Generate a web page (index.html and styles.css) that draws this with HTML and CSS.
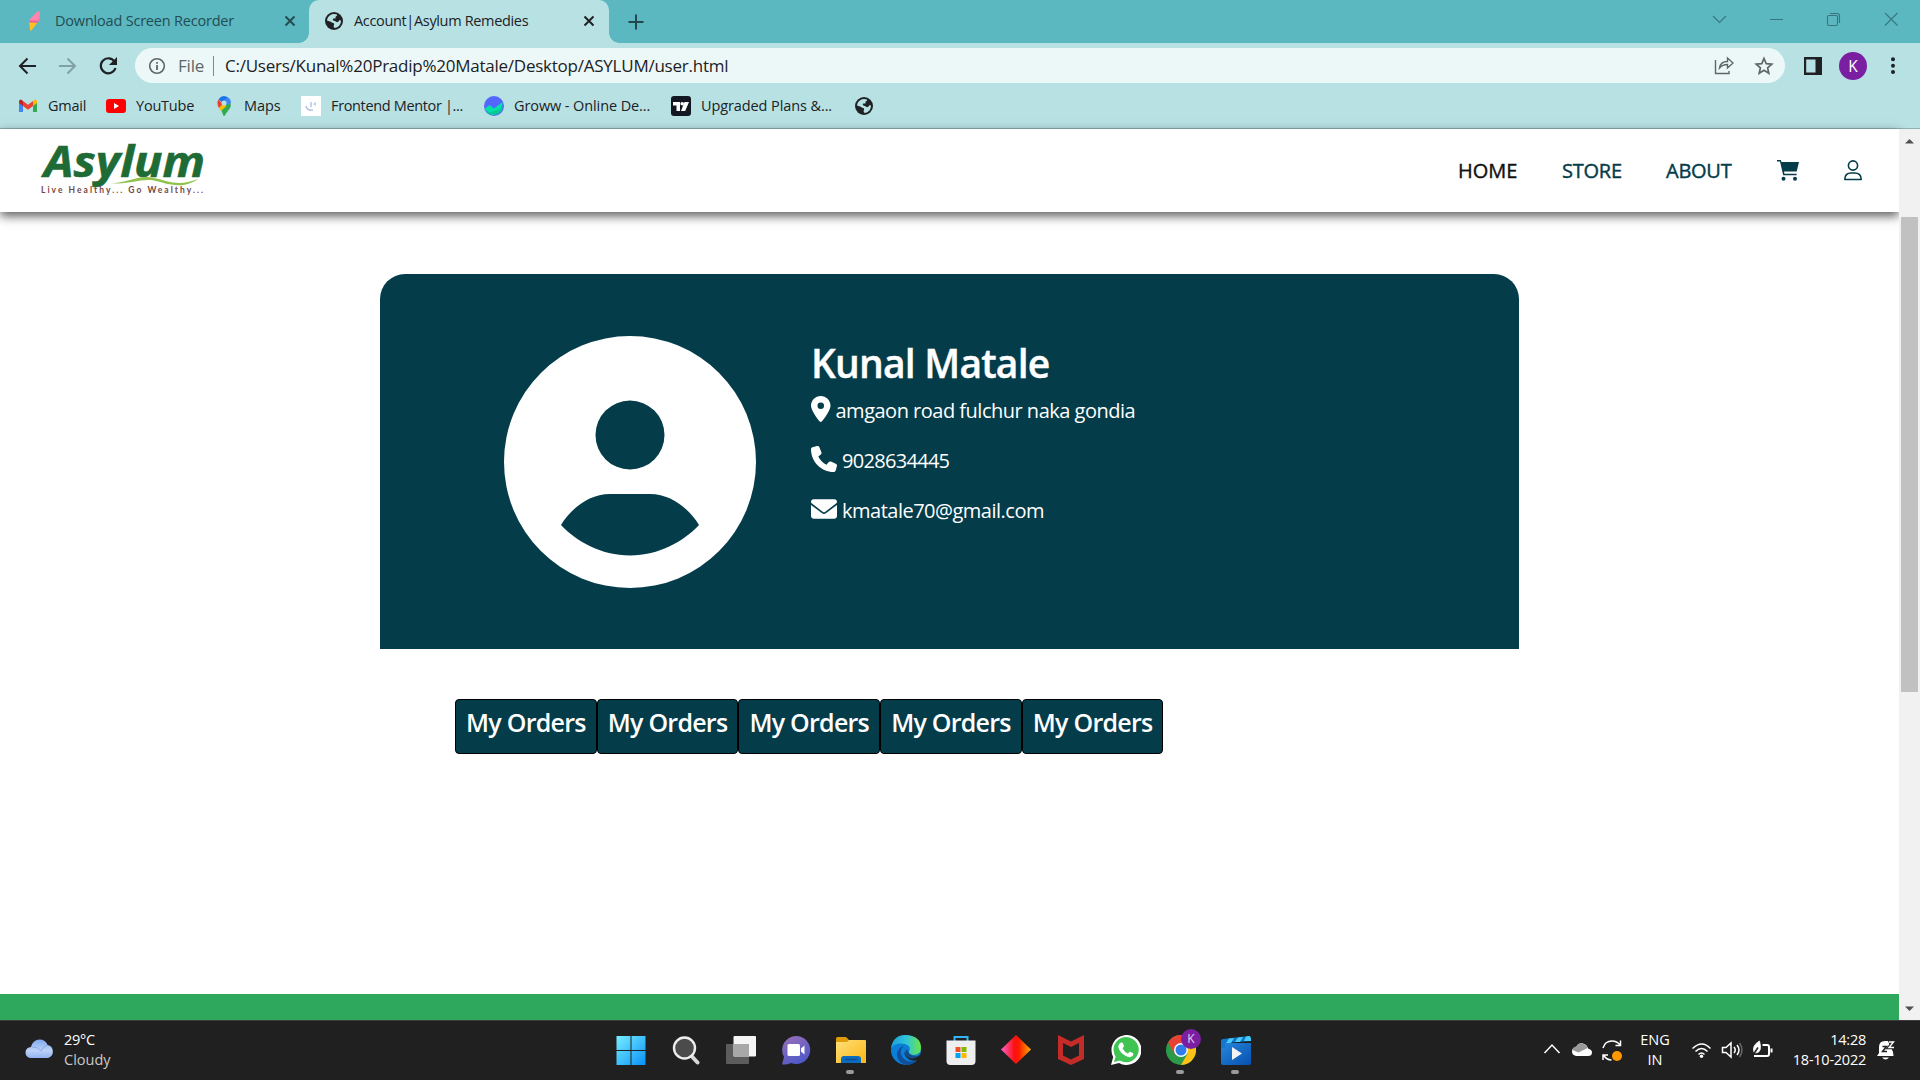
FILE: index.html
```html
<!DOCTYPE html>
<html lang="en">
<head>
<meta charset="utf-8">
<title>Account|Asylum Remedies</title>
<link rel="stylesheet" href="styles.css">
</head>
<body>
<svg class="defs" aria-hidden="true">
  <symbol id="globe" viewBox="0 0 18 18">
    <circle cx="9" cy="9" r="9" fill="#202124"/>
    <path fill="#b8e1e4" d="M2 8.500 5 9.600c1 .2 1.300 1 2.400 1.200 1.200.1 1.900.6 1.700 1.700L8.600 14c0 .9.400 1.600 1.200 2A7.100 7.100 0 0 0 16 8.400l-1.700-.2-1 1.600c-.8.700-2 .4-2.400-.4L8.500 8.600C7.400 8 7.600 6.500 8.900 6.500l1.600-.1V5c.3-.9 1.500-.7 1.500-1.800V2.600A7.200 7.200 0 0 0 2 8.500z"/>
  </symbol>
  <symbol id="close" viewBox="0 0 12 12"><path d="M1.500 1.500l9 9m0-9l-9 9" fill="none" stroke="currentColor" stroke-width="2"/></symbol>
</svg>

<header class="tabs">
  <div class="tab">
    <svg class="tab-icon" viewBox="0 0 18 22"><path d="M4 10 13 1q2 0 2 3l-1 7-8 2z" fill="#ff85ae"/><path d="M4 11l9 1-7 9q-1 0-1-2z" fill="#ffc11f"/><path d="M4 10.500l10 .3-1.500 2-8-.3z" fill="#e95f98"/></svg>
    <span class="tab-title t-download">Download Screen Recorder</span>
    <svg class="tab-close"><use href="#close"/></svg>
  </div>
  <div class="tab active">
    <svg class="tab-icon globe"><use href="#globe"/></svg>
    <span class="tab-title t-account">Account|Asylum Remedies</span>
    <svg class="tab-close"><use href="#close"/></svg>
  </div>
  <svg class="new-tab" viewBox="0 0 16 16"><path d="M8 .5v15M.5 8h15" stroke="#23474d" stroke-width="2"/></svg>
  <svg class="window-buttons" viewBox="0 0 190 16" fill="none" stroke="#38767d" stroke-width="1.100">
    <path d="M3 5l6.500 6.500L16 5M60 8.500h13M175 2l12.500 12.500m0-12.500L175 14.500"/>
    <rect x="117.500" y="4.500" width="10" height="10" rx="1.500"/><path d="M120 2.500h7q2.500 0 2.500 2.500v7"/>
  </svg>
</header>

<div class="toolbar">
  <svg class="nav-buttons" viewBox="0 0 102 20" fill="none" stroke-width="2">
    <path d="M19 10H3M10.500 2.500 3 10l7.500 7.500" stroke="#202124"/>
    <path d="M42 10h16M50.500 2.500 58 10l-7.500 7.500" stroke="#82a1a5"/>
    <path d="M97.500 5.500A7.500 7.500 0 1 0 98.500 12" stroke="#202124" stroke-width="2.200"/><path d="M100 1v8h-8z" fill="#202124"/>
  </svg>
  <div class="omnibox">
    <svg class="info" viewBox="0 0 18 18"><circle cx="9" cy="9" r="7.300" fill="none" stroke="#5f6668" stroke-width="1.600"/><path d="M9 8v5M9 5v1.800" stroke="#5f6668" stroke-width="1.800"/></svg>
    <span class="scheme">File</span>
    <span class="url">C:/Users/Kunal%20Pradip%20Matale/Desktop/ASYLUM/user.html</span>
    <svg class="share" viewBox="0 0 60 20" fill="none" stroke="#5f6668" stroke-width="1.400">
      <path d="M1.500 4v13.500H15V15M5.500 12q1-6.500 8-6.500V2l5.500 5-5.500 5V8.500q-5 0-8 3.500z"/>
      <path d="M50 2.500l2.200 5.100 5.600.5-4.200 3.700 1.200 5.400-4.800-2.900-4.800 2.900 1.200-5.400-4.200-3.700 5.600-.5z" stroke-width="1.700"/>
    </svg>
  </div>
  <svg class="side-panel" viewBox="0 0 18 18"><path d="M0 0h18v18H0z" fill="#202124"/><path d="M2.200 2.500h9.300v13H2.200z" fill="#b8e1e4"/></svg>
  <span class="profile">K</span>
  <svg class="menu" viewBox="0 0 4 18" fill="#202124"><circle cx="2" cy="2.300" r="2"/><circle cx="2" cy="8.700" r="2"/><circle cx="2" cy="15.100" r="2"/></svg>
</div>

<nav class="bookmarks">
  <a class="bm"><svg viewBox="0 0 20 20"><path d="M1 5v11h4V9z" fill="#4285f4"/><path d="M15 9v7h4V5z" fill="#34a853"/><path d="M5 5v5l5 3.700L15 10V5l-5 3.700z" fill="#ea4335"/><path d="M1 5.500Q1 3.500 3 3.500L5 5v5L1 7z" fill="#c5221f"/><path d="M19 5.500Q19 3.500 17 3.500L15 5v5l4-3z" fill="#fbbc04"/></svg><span class="t-gmail">Gmail</span></a>
  <a class="bm"><svg viewBox="0 0 20 20"><rect y="3" width="20" height="14" rx="3" fill="red"/><path d="M8 7v6l5-3z" fill="#fff"/></svg><span class="t-yt">YouTube</span></a>
  <a class="bm"><svg viewBox="0 0 20 20"><path d="M10 20q-.8 0-1.200-2Q8 15 5 11L15 4q4 6-1 11-2 2-2.800 4-.4 1-1.200 1z" fill="#34a853"/><path d="M4.500 3.500 9 8l-4 4Q2 7 4.500 3.500z" fill="#ea4335"/><path d="M4.500 3.300Q7 0 10 0q2 0 4 1.500L9 7z" fill="#1a73e8"/><path d="M13.500 1Q17 3 17 7L12 9 9 6z" fill="#4285f4"/><path d="M5 12l4.500-5 3 3L7 15z" fill="#fbbc04"/><circle cx="10" cy="7" r="2.500" fill="#b8e1e4"/></svg><span class="t-maps">Maps</span></a>
  <a class="bm"><svg viewBox="0 0 20 20"><path d="M0 0h20v20H0z" fill="#fff"/><path d="M5 10q1 5 7 4M10 6v5" fill="none" stroke="#b7c3e6" stroke-width="1.500"/><path d="M12 8l3-2v4z" fill="#a8d9ec"/></svg><span class="t-fm">Frontend Mentor |...</span></a>
  <a class="bm"><svg viewBox="0 0 20 20"><circle cx="10" cy="10" r="10" fill="#5367ff"/><path d="M.5 13l5-4 4.500 3.500L18.500 6A10 10 0 0 1 .5 13z" fill="#00e3a5"/><path d="M2 16q8 1 17-5A10 10 0 0 1 2 16z" fill="#08c898"/></svg><span class="t-groww">Groww - Online De...</span></a>
  <a class="bm"><svg viewBox="0 0 20 20"><rect width="20" height="20" rx="3" fill="#131722"/><path d="M2 6h7v9H5.500V9.500H2zM13.500 6H18l-3.800 9H10z" fill="#fff"/><circle cx="11.200" cy="7.800" r="1.800" fill="#fff"/></svg><span class="t-tv">Upgraded Plans &amp;...</span></a>
  <a class="bm"><svg class="globe"><use href="#globe"/></svg></a>
</nav>

<div class="viewport">
  <main class="page">
    <div class="site-nav">
      <svg class="logo" viewBox="0 0 170 64" role="img" aria-label="Asylum">
        <text x="4" y="39" textLength="161" lengthAdjust="spacingAndGlyphs" class="logo-name">Asylum</text>
        <path d="M70 45c18 1 27-9 44-5 15 3 24 9 44 1-16 11-29 5-44 1.500-15-2-24 4.500-44 2.500z" fill="#8fc24a"/>
        <text x="1" y="55" textLength="162" class="logo-tag">Live Healthy... Go Wealthy...</text>
      </svg>
      <div class="links">
        <a class="current">HOME</a><a>STORE</a><a>ABOUT</a>
        <svg class="cart" viewBox="0 0 22 22" fill="#043c4a"><path d="M0 0h3.700L4.600 2H22l-2.300 9.500H7l.4 2.200h12.200v1.500H6.200L3 1.500H0z"/><circle cx="6.500" cy="18.700" r="2"/><circle cx="18" cy="18.700" r="2"/></svg>
        <svg class="user" viewBox="0 0 18 21" fill="none" stroke="#043c4a" stroke-width="1.600"><circle cx="9" cy="5.500" r="4.600"/><path d="M.8 19.500q0-6.500 6.500-6.500h3.400q6.500 0 6.500 6.500z" stroke-linejoin="round"/></svg>
      </div>
    </div>

    <section class="card">
      <svg class="avatar" viewBox="0 0 252 252"><path fill="#fff" fill-rule="evenodd" d="M126 0a126 126 0 1 1 0 252A126 126 0 0 1 126 0zm0 64.500a34.500 34.500 0 1 0 0 69 34.500 34.500 0 0 0 0-69zM57 189c15 16 40 30.500 69 30.500S180 205 195 189c-9-15-27-31-49-31h-40c-22 0-40 16-49 31z"/></svg>
      <div class="details">
        <h1>Kunal Matale</h1>
        <p><svg class="pin" viewBox="0 0 384 512"><path d="M215.700 499.200C267 435 384 279.400 384 192 384 86 298 0 192 0S0 86 0 192c0 87.400 117 243 168.300 307.200 12.300 15.300 35.100 15.300 47.400 0zM192 128a64 64 0 1 1 0 128 64 64 0 1 1 0-128z"/></svg><span>amgaon road fulchur naka gondia</span></p>
        <p><svg viewBox="0 0 512 512"><path d="M164.900 24.600c-7.700-18.600-28-28.500-47.400-23.200l-88 24C12.100 30.200 0 46 0 64c0 247.400 200.600 448 448 448 18 0 33.800-12.100 38.600-29.500l24-88c5.300-19.400-4.600-39.700-23.200-47.400l-96-40c-16.300-6.800-35.200-2.100-46.300 11.600L304.700 368C234.300 334.700 177.300 277.700 144 207.300L193.300 167c13.700-11.200 18.400-30 11.600-46.300z"/></svg><span class="t-phone">9028634445</span></p>
        <p><svg viewBox="0 0 512 512"><path d="M48 64a48 48 0 0 0-29 86l218 164q19 14 38 0l218-164a48 48 0 0 0-29-86zM0 176v208q0 64 64 64h384q64 0 64-64V176L294 339q-38 29-76 0z"/></svg><span>kmatale70@gmail.com</span></p>
      </div>
    </section>

    <div class="actions">
      <button>My Orders</button><button>My Orders</button><button>My Orders</button><button>My Orders</button><button>My Orders</button>
    </div>
    <footer class="strip"></footer>
  </main>
  <div class="scrollbar">
    <svg viewBox="0 0 21 10"><path d="M6 7.500 10.500 3 15 7.500z" fill="#505050"/></svg>
    <div class="thumb"></div>
    <svg viewBox="0 0 21 10"><path d="M6 2.500h9L10.500 7z" fill="#505050"/></svg>
  </div>
</div>

<footer class="taskbar">
  <div class="weather">
    <svg viewBox="0 0 30 20"><defs><linearGradient id="cl" x2="0" y2="1"><stop stop-color="#7fa9ee"/><stop offset=".6" stop-color="#bcd2f7"/><stop offset="1" stop-color="#93b3f0"/></linearGradient></defs><path d="M6 19a5.500 5.500 0 0 1 0-11Q8 .5 14.500.5q6 0 8 5.500A6.700 6.700 0 0 1 23 19z" fill="url(#cl)"/><path d="M7 8q5-1 9 4 2-5 7-6" fill="none" stroke="#88aaea" stroke-width="1"/></svg>
    <div><span class="t-temp">29°C</span><br><span class="muted">Cloudy</span></div>
  </div>
  <div class="apps">
    <div class="app"><svg viewBox="0 0 30 30"><defs><linearGradient id="win" x2="1" y2="1"><stop stop-color="#77eeff"/><stop offset="1" stop-color="#0991f7"/></linearGradient></defs><path fill="url(#win)" d="M.5 1h14v14H.5zM15.500 1h14v14h-14zM.5 16h14v14H.5zM15.500 16h14v14h-14z"/></svg></div>
    <div class="app"><svg viewBox="0 0 30 30"><path d="m20.500 21 6 6.500" stroke="#d5d7d9" stroke-width="4" stroke-linecap="round"/><circle cx="13.500" cy="13" r="10.500" fill="#4b4b4b" stroke="#eceded" stroke-width="2.400"/></svg></div>
    <div class="app"><svg viewBox="0 0 30 30"><rect y="9" width="23" height="20" rx="1" fill="#5c5c5c"/><rect x="7.500" y="1" width="22.500" height="20.500" rx="1" fill="#f5f5f5"/><path d="M7.500 9H23v12.500H7.500z" fill="#a8a8a8"/></svg></div>
    <div class="app"><svg viewBox="0 0 30 30"><defs><linearGradient id="chat" x2=".5" y2="1"><stop stop-color="#9c70b6"/><stop offset="1" stop-color="#5059c9"/></linearGradient></defs><path d="M15 1a14 14 0 1 1-5 27q-3 1.500-9 1.500L3 22A14 14 0 0 1 15 1z" fill="url(#chat)"/><rect x="6.500" y="9" width="12.500" height="12" rx="1.500" fill="#fff"/><path d="m20 13.500 3.500-3v9l-3.500-3z" fill="#fff"/></svg></div>
    <div class="app running"><svg viewBox="0 0 30 30"><defs><linearGradient id="fold" x2="1" y2="1"><stop stop-color="#ffe07a"/><stop offset="1" stop-color="#fbb612"/></linearGradient></defs><path d="M0 3.500Q0 2 1.500 2H10l3 3v7H0z" fill="#df9c08"/><path d="M0 7h11l2-2h16q1 0 1 1v22H0z" fill="url(#fold)"/><path d="M5 28v-4q0-3 3-3h14q3 0 3 3v4z" fill="#0c6bbd"/><path d="M9 24.500h12" stroke="#064b8d" stroke-width="1.300"/></svg></div>
    <div class="app"><svg viewBox="0 0 30 30"><defs><linearGradient id="edge" x2="1"><stop stop-color="#1c9fd8"/><stop offset=".5" stop-color="#2fc3dc"/><stop offset="1" stop-color="#69e645"/></linearGradient></defs><circle cx="15" cy="15" r="15" fill="#0b7fd8"/><path d="M0 13Q2 0 15 0q15 1 15 13 0 7-8 7-5 0-4-3 3-6-4-8Q5 7 0 13z" fill="url(#edge)"/><path d="M13 11q-6 5-1 12 6 6 14 2-4 5-11 5Q5 27 6 18q2-6 7-7z" fill="#0f4f9b"/><path d="M15 12q-4 5 1 9 5 3 11 0l3-2v11H22l5-5q-7 2-11-2-5-5-1-11z" fill="#202020"/><path d="M16 14q2 8 12 7-7 5-12 1-4-4 0-8z" fill="#134d90"/></svg></div>
    <div class="app"><svg viewBox="0 0 30 30"><path d="M8.500 8V2h13v6" fill="none" stroke="#31b6f3" stroke-width="2"/><path d="M.5 5.500h29V26q0 4-4 4h-21q-4 0-4-4z" fill="#efefef"/><path d="M9.500 12h5v5h-5z" fill="#f25022"/><path d="M15.500 12h5v5h-5z" fill="#7fba00"/><path d="M9.500 18h5v5h-5z" fill="#00a4ef"/><path d="M15.500 18h5v5h-5z" fill="#ffb900"/></svg></div>
    <div class="app"><svg viewBox="0 0 30 30"><defs><linearGradient id="dia"><stop stop-color="#ff62cf"/><stop offset=".45" stop-color="#fb1010"/><stop offset=".6" stop-color="#fb1c00"/><stop offset="1" stop-color="#ffb000"/></linearGradient></defs><path d="M15 0l15 14.500L15 29 0 14.500z" fill="url(#dia)"/></svg></div>
    <div class="app"><svg viewBox="0 0 30 30"><path fill="#c52b29" fill-rule="evenodd" d="M2 0l13 6.500L28 0v24l-13 6-13-6zM7 8v12.500l8 4 8-4V8l-8 4z"/></svg></div>
    <div class="app"><svg viewBox="0 0 30 30"><path d="M0 30l2.200-8A15 15 0 1 1 8 28z" fill="#fff"/><path d="M3 27l1.600-5.500A12.600 12.600 0 1 1 9 25.600z" fill="#3fc351"/><path d="M10 7.500q1.500-.5 2 1l1 2.500q0 1-1.500 2.200 2 4 5.500 5.300 1.300-2 2.200-1.800l3 1.500q.7 1-.7 2.800-2.500 2.500-7.500-.5-5-3-6.500-7.500-.8-3.500 2.500-5.500z" fill="#fff"/></svg></div>
    <div class="app running"><svg viewBox="0 0 30 30"><circle cx="15" cy="15" r="15" fill="#2b9b4a"/><path d="M2 7.500A15 15 0 0 1 28 7.500H15L8.500 18.700z" fill="#e84235"/><path d="M28 7.500A15 15 0 0 1 15 30l6.500-11.200L22 11l-7-3.500z" fill="#fbc116"/><circle cx="15" cy="15" r="7" fill="#fff"/><circle cx="15" cy="15" r="5.500" fill="#2f7ced"/></svg><span class="badge">K</span></div>
    <div class="app running"><svg viewBox="0 0 30 30"><defs><linearGradient id="mov" x2="1" y2="1"><stop stop-color="#2687dc"/><stop offset="1" stop-color="#0750ad"/></linearGradient></defs><path d="M0 8h30v20q0 2-2 2H2q-2 0-2-2z" fill="url(#mov)"/><path d="M0 6q0-2 2-2l26-3q2 0 2 5L4 8v5H0z" fill="#1476cd"/><path d="m8 3.500 5-.6L10 8H5zM17 2.500l5-.6L19 7h-5zM25 1.500l3-.4q2 0 2 4.900h-7z" fill="#45cdfb"/><path d="M11 12v13l10-6.500z" fill="#f2f4f6"/></svg></div>
  </div>
  <div class="tray">
    <svg class="tray-left" viewBox="0 0 80 24" fill="none" stroke="#fff" stroke-width="1.500">
      <path d="m1.500 16 7.500-8 7.500 8"/>
      <path d="M33 19q-4-1-4-4.500 0-4 4-4 2-5 7-4 4 1 5 5 4 1 4 4 0 3.500-4 3.500z" fill="#fff" stroke="none"/><path d="M29.500 13q.5-3.500 4-3.500 2-4 6-3 4 1 5 4.500l-9 4.500z" fill="#999" stroke="none"/>
      <path d="M60 11q2-7 9-7 5 0 8 4m.500-4.500v5h-5M60 23v-5h5m-4.500 0q3 5 8 5"/><circle cx="74" cy="19" r="5" fill="#ff9800" stroke="none"/>
    </svg>
    <div class="lang">ENG<br>IN</div>
    <svg class="tray-right" viewBox="0 0 82 20" fill="none" stroke="#fff" stroke-width="1.500">
      <path d="M1.500 8.500q9.500-9 18 0M4.500 11.500q6-6 12 0M7.500 14.500q3-3 6 0"/><circle cx="10.500" cy="16.200" r="1.700" fill="#fff" stroke="none"/>
      <path d="M31.500 7.500h3.500l5-4.500v14l-5-4.500h-3.500zM43 7q2.500 3 0 6M46 5q4 5 0 10"/><path d="M48.500 3q5 7 0 14" stroke="#666"/>
      <path d="M71.500 5H76q2 0 2 2v7q0 2-2 2H63M80.500 8.500v4" stroke-width="2"/><path d="M63 12.500Q60.500 5.500 68.500 1q3 11-3 11.800-2 .2-2.500-.3z" fill="#fff" stroke-width=".8"/><path d="m61 16.500 6-9" stroke="#202020"/>
    </svg>
    <div class="clock">14:28<br><span class="t-date">18-10-2022</span></div>
    <svg class="bell" viewBox="0 0 18 21"><path d="M0 16l2-3V7Q2 1 8 1h3l5 11 .500 4zM5 17.500h7q-3.500 4-7 0z" fill="#fff"/><path d="M5.500 6.500h4L5.500 11.500h4.500" fill="none" stroke="#202020" stroke-width="1.500"/><path d="M12 2h4.500l-4.500 5.500h5" fill="none" stroke="#202020" stroke-width="3.500"/><path d="M12 2h4.500l-4.500 5.500h5" fill="none" stroke="#fff" stroke-width="1.400"/></svg>
  </div>
</footer>
</body>
</html>
```
FILE: styles.css
```css
* { box-sizing: border-box; }

body {
  margin: 0;
  width: 1920px;
  height: 1080px;
  overflow: hidden;
  display: flex;
  flex-direction: column;
  background: #fff;
  color: #202124;
  font-family: "Open Sans", "Noto Sans", sans-serif;
  font-size: 14.5px;
  line-height: 20px;
}

svg { display: block; flex: none; }
span, a { white-space: nowrap; }
.defs { position: absolute; width: 0; height: 0; }

/* Tab strip */
.tabs { display: flex; align-items: center; height: 43px; background: #5bb8c1; }
.tab { display: flex; align-items: center; width: 309px; height: 43px; padding: 0 13px 2px 25px; color: #244c52; }
.tab-icon { width: 18px; height: 22px; margin-right: 12px; }
.tab-title { flex: 1; }
.t-download { letter-spacing: -.2px; }
.t-account { letter-spacing: -.34px; }
.tab-close { width: 12px; height: 12px; }
.tab.active {
  position: relative;
  width: 300px;
  padding: 0 14px 2px 16px;
  border-radius: 10px 10px 0 0;
  background: #b8e1e4;
  color: #202124;
}
.tab.active::before,
.tab.active::after {
  content: "";
  position: absolute;
  bottom: 0;
  width: 10px;
  height: 10px;
}
.tab.active::before { left: -10px; background: radial-gradient(circle at 0 0, transparent 9.500px, #b8e1e4 10px); }
.tab.active::after { right: -10px; background: radial-gradient(circle at 100% 0, transparent 9.500px, #b8e1e4 10px); }
.tab-icon.globe { height: 18px; margin-right: 11px; }
.new-tab { width: 16px; height: 16px; margin-left: 19px; }
.window-buttons { width: 190px; height: 16px; margin: 0 20px 6px auto; }

/* Toolbar */
.toolbar { display: flex; align-items: center; height: 45px; padding: 0 25px 0 17px; background: #b8e1e4; }
.nav-buttons { width: 102px; height: 20px; margin-right: 16px; }
.omnibox {
  display: flex;
  align-items: center;
  width: 1650px;
  height: 35px;
  padding: 0 11px 0 12px;
  border-radius: 18px;
  background: #ecf8f8;
  font-size: 17px;
}
.info { width: 18px; height: 18px; margin: 0 12px 0 1px; }
.scheme { width: 36px; height: 20px; border-right: 1px solid #82898a; margin-right: 11px; color: #5f6668; line-height: 19px; letter-spacing: -.2px; }
.url { flex: 1; line-height: 19px; letter-spacing: -.24px; }
.share { width: 60px; height: 20px; }
.side-panel { width: 18px; height: 18px; margin-left: 19px; }
.profile {
  width: 28px;
  height: 28px;
  margin: 0 24px 0 17px;
  border-radius: 50%;
  background: #7b1fa2;
  color: #fff;
  text-align: center;
  font-size: 15.500px;
  line-height: 28px;
}
.menu { width: 4px; height: 18px; }

/* Bookmarks bar */
.bookmarks {
  display: grid;
  grid-template-columns: 88px 108px 87px 183px 187px 183px 20px;
  align-items: center;
  height: 41px;
  padding: 0 0 5px 18px;
  background: #b8e1e4;
  border-bottom: 1px solid #8cb2b6;
}
.bm { display: flex; align-items: center; gap: 10px; letter-spacing: -.1px; }
.bm svg { width: 20px; height: 20px; }
.bm .globe { width: 18px; height: 18px; margin-left: 1px; }
.t-gmail, .t-yt { letter-spacing: -.22px; }
.t-fm { letter-spacing: -.35px; }

/* Browser viewport */
.viewport { display: flex; height: 891px; }
.page { display: flex; flex-direction: column; width: 1899px; background: #fff; }
.site-nav {
  display: flex;
  flex: none;
  align-items: center;
  justify-content: space-between;
  height: 83px;
  padding: 0 37px 0 40px;
  background: #fff;
  box-shadow: 0 4px 10px rgba(0, 0, 0, .65);
}
.logo { width: 170px; height: 64px; margin-bottom: 1px; overflow: visible; }
.logo-name { font: italic 700 43px "Open Sans", sans-serif; fill: #1f6b35; stroke: #1f6b35; stroke-width: .6px; }
.logo-tag { font: 700 8.500px Lato, sans-serif; fill: #75473f; }
.links { display: flex; align-items: center; font-size: 20px; color: #043c4a; letter-spacing: -.25px; -webkit-text-stroke: .4px currentColor; }
.links a { width: 104px; }
.links .current { color: #111; letter-spacing: 0; }
.links a:nth-child(3) { width: 111px; }
.cart { width: 22px; height: 22px; margin-right: 45px; }
.user { width: 18px; height: 21px; }

.card {
  display: flex;
  flex: none;
  width: 1139px;
  height: 375px;
  margin: 62px 0 0 380px;
  padding: 62px 0 0 124px;
  border-radius: 25px 25px 0 0;
  background: #043c4a;
  color: #fff;
}
.avatar { width: 252px; height: 252px; margin-right: 55px; }
h1 { margin: 3px 0 10px; font-size: 39px; font-weight: 600; line-height: 48px; letter-spacing: -.8px; -webkit-text-stroke: .4px currentColor; }
.details p { display: flex; align-items: center; height: 26px; margin: 0 0 24px; font-size: 20px; letter-spacing: -.5px; gap: 5px; }
.details p svg { width: 26px; height: 26px; margin-bottom: 3px; fill: #fff; }
.details p span { margin-top: 2px; }
.details .t-phone { letter-spacing: -.7px; }
.details .pin { width: 19.500px; }

.actions { display: flex; margin: 50px 0 0 455px; }
.actions button {
  width: 141.700px;
  height: 55px;
  padding: 0 0 9px;
  border: 1px solid #000;
  border-radius: 4px;
  background: #043c4a;
  color: #fff;
  font: 600 25px "Open Sans", "Noto Sans", sans-serif;
  letter-spacing: -.75px;
  white-space: nowrap;
}
.strip { height: 26px; margin-top: auto; background: #2ea85c; }

.scrollbar { display: flex; flex-direction: column; width: 21px; padding: 7px 0 6px; background: #f1f1f1; }
.scrollbar svg { width: 21px; height: 10px; }
.thumb { width: 17px; height: 475px; margin: 71px 2px auto; background: #c1c1c1; }

/* Taskbar */
.taskbar {
  display: flex;
  height: 60px;
  background: #202020;
  border-top: 1px solid #3c3c3c;
  color: #fff;
  font-size: 14.500px;
}
.weather { display: flex; width: 604px; padding: 9px 0 0 25px; gap: 9px; }
.weather svg { width: 30px; height: 20px; margin-top: 9px; }
.t-temp { letter-spacing: -.3px; }
.muted { color: #c8c8c8; }
.apps { display: flex; }
.app { position: relative; display: flex; justify-content: center; width: 55px; padding-top: 14px; }
.app svg { width: 30px; height: 30px; }
.running::after {
  content: "";
  position: absolute;
  left: 23px;
  top: 49px;
  width: 8px;
  height: 4px;
  border-radius: 2px;
  background: #9a9a9a;
}
.badge {
  position: absolute;
  left: 28px;
  top: 8px;
  width: 20px;
  height: 20px;
  border-radius: 50%;
  background: #7b1fa2;
  color: #e4d0ec;
  font-size: 12px;
  text-align: center;
}
.tray { display: flex; flex: 1; padding: 9px 25px 0 280px; }
.tray-left { width: 80px; height: 24px; margin-top: 7px; }
.lang { width: 40px; margin-left: 12px; text-align: center; }
.tray-right { width: 82px; height: 20px; margin: 10px 0 0 16px; }
.clock { width: 93px; text-align: right; white-space: nowrap; letter-spacing: -.25px; }
.bell { width: 18px; height: 21px; margin: 10px 0 0 11px; }
```
